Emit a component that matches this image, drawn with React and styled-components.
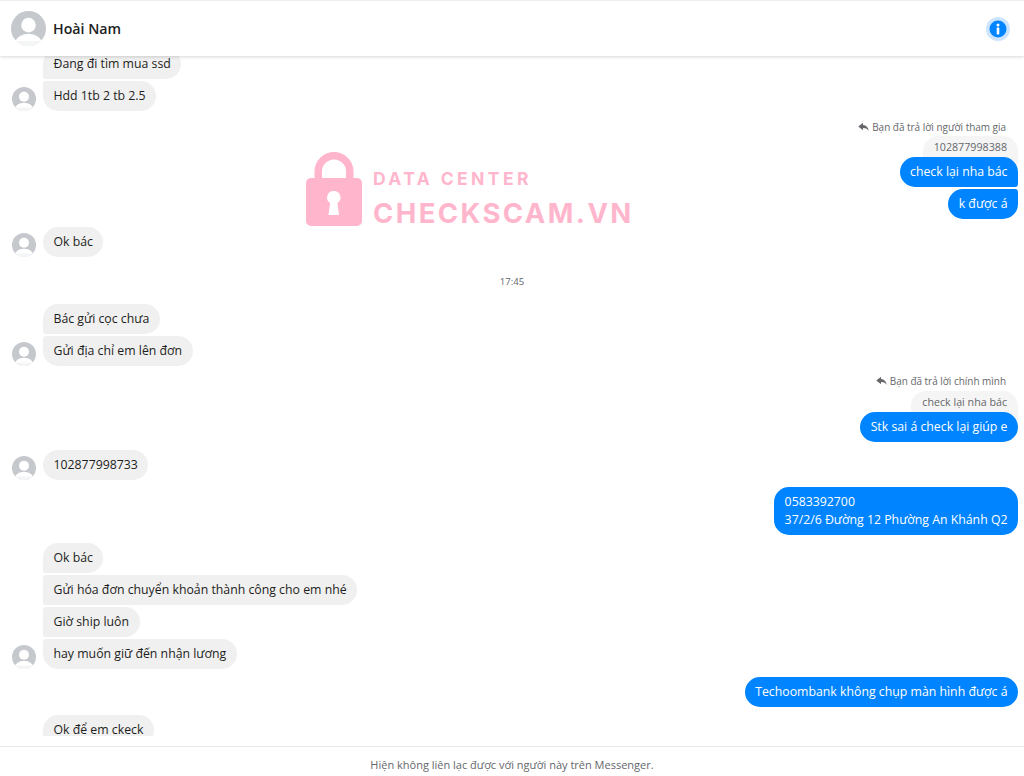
import React from "react";
import styled, { createGlobalStyle } from "styled-components";

const Global = createGlobalStyle`
  html, body { margin: 0; padding: 0; background: #fff; }
  * { box-sizing: border-box; }
  body { font-family: "Open Sans", "Noto Sans", sans-serif; }
`;
const Page = styled.div`
  width: 1024px; height: 776px; position: relative; overflow: hidden;
  display: flex; flex-direction: column; background: #fff; color: #1c1e21;
`;
const Header = styled.header`
  height: 56px; flex: none; display: flex; align-items: center; justify-content: space-between;
  padding: 0 14px 0 11px; background: #fff; position: relative; z-index: 2;
  border-top: 1px solid #eceef0;
  box-shadow: 0 1px 3px rgba(0,0,0,.16);
`;
const Person = styled.div`display: flex; align-items: center; gap: 7px;`;
const Name = styled.div`font-size: 14.2px; font-weight: 600; color: #1c1e21;`;
const InfoRing = styled.div`
  width: 24px; height: 24px; border-radius: 50%; background: #cce4ff;
  display: flex; align-items: center; justify-content: center;
`;
const Thread = styled.main`
  height: 680px; flex: none; overflow: hidden; padding: 0 6px 0 12px;
  display: flex; flex-direction: column; gap: 7.75px;
`;
const Group = styled.div`
  display: flex; flex-direction: column; gap: 2px;
  align-items: ${p => (p.$mine ? "flex-end" : "stretch")};
  margin-top: ${p => p.$top || 0}px;
`;
const Row = styled.div`display: flex; align-items: flex-end; gap: 7px; padding-left: ${p => (p.$indent ? 31 : 0)}px;`;
const radius = (mine, pos) => {
  const small = 3, big = 15;
  const t = pos === "middle" || pos === "last" ? small : big;
  const b = pos === "middle" || pos === "first" ? small : big;
  return mine ? `${big}px ${t}px ${b}px ${big}px` : `${t}px ${big}px ${big}px ${b}px`;
};
const Bubble = styled.div`
  padding: 6px 10.5px; font-size: 12.3px; line-height: 18px; white-space: pre-line;
  background: ${p => (p.$mine ? "#0084ff" : "#f1f0f0")};
  color: ${p => (p.$mine ? "#fff" : "#1c1e21")};
  border-radius: ${p => radius(p.$mine, p.$pos)};
  position: relative; z-index: 1;
`;
const ReplyLabel = styled.div`
  display: flex; align-items: center; gap: 3px; height: 15.25px; margin-right: 12px;
  font-size: 9.95px; color: #65676b;
`;
const Quote = styled.div`
  background: #f5f5f5; color: #65676b; font-size: 10.7px; line-height: 16px;
  padding: 3px 11px 10px; border-radius: 15px 15px 0 0; margin-bottom: -10px;
`;
const Stamp = styled.div`
  text-align: center; font-size: 9.6px; line-height: 14px; color: #65676b; margin: 10.5px 6px 6.75px 0;
`;
const Footer = styled.footer`
  margin-top: auto; height: 30px; padding-top: 5px; border-top: 1px solid #e9eaec;
  display: flex; align-items: center; justify-content: center;
  font-size: 11px; color: #65676b;
`;
const Watermark = styled.div`
  position: absolute; left: 306px; top: 152px; display: flex; gap: 11px; align-items: flex-start;
  color: #ffb6cd; font-family: Inter, "Open Sans", sans-serif; font-weight: 700; pointer-events: none;
`;
const MarkText = styled.div`display: flex; flex-direction: column; padding-top: 15px;`;
const MarkSmall = styled.div`font-size: 17.5px; line-height: 23px; letter-spacing: 3.4px;`;
const MarkLarge = styled.div`font-size: 27.5px; line-height: 36px; margin-top: 5px; letter-spacing: 2.4px;`;

const Avatar = ({ size }) => (
  <svg width={size} height={size} viewBox="0 0 36 36">
    <defs><clipPath id={`av${size}`}><circle cx="18" cy="18" r="18" /></clipPath></defs>
    <g clipPath={`url(#av${size})`}>
      <rect width="36" height="36" fill="#c5c8cc" />
      <circle cx="18" cy="14.5" r="7.5" fill="#fff" />
      <ellipse cx="18" cy="33" rx="13.5" ry="9.5" fill="#fff" />
      <rect y="31" width="36" height="5" fill="#f0f1f2" opacity=".7" />
    </g>
  </svg>
);
const ReplyIcon = () => (
  <svg width="11" height="10" viewBox="0 0 12 10" fill="#65676b">
    <path d="M5.500 0.300 0.300 4.400 5.500 8.500V6c2.700 0 4.500.7 6.200 3.300-.3-3.700-2.400-6.200-6.200-6.600z" />
  </svg>
);
const InfoIcon = () => (
  <svg width="18" height="18" viewBox="0 0 18 18">
    <circle cx="9" cy="9" r="8.500" fill="#0084ff" />
    <circle cx="9" cy="5.100" r="1.500" fill="#fff" />
    <rect x="7.700" y="7.600" width="2.600" height="6.800" rx=".6" fill="#fff" />
  </svg>
);
const Lock = () => (
  <svg width="56" height="74" viewBox="0 0 56 74">
    <path d="M8.500 28V19.500a19.500 19.500 0 0 1 39 0V28H40V19.500a12 12 0 0 0-24 0V28z" fill="#ffb6cd" />
    <path fillRule="evenodd" fill="#ffb6cd" d="M5 26h46a5 5 0 0 1 5 5v38a5 5 0 0 1-5 5H5a5 5 0 0 1-5-5V31a5 5 0 0 1 5-5zM27.500 39a6.500 6.500 0 0 0-3.400 12L22.500 63h10.500l-1.600-12a6.500 6.500 0 0 0-3.900-12z" />
  </svg>
);

const Theirs = ({ items, top, cut }) => (
  <Group $top={top}>
    {items.map((t, i) => {
      const last = i === items.length - 1;
      const pos = items.length === 1 && !cut ? "single" : i === 0 ? "first" : last ? "last" : "middle";
      const withAvatar = last && !cut;
      return (
        <Row key={t} $indent={!withAvatar}>
          {withAvatar && <Avatar size={24} />}
          <Bubble $pos={pos}>{t}</Bubble>
        </Row>
      );
    })}
  </Group>
);
const Mine = ({ label, quote, items }) => (
  <Group $mine>
    {label && <ReplyLabel><ReplyIcon />{label}</ReplyLabel>}
    {quote && <Quote>{quote}</Quote>}
    {items.map((t, i) => {
      const last = i === items.length - 1;
      const pos = items.length === 1 ? "single" : i === 0 ? "first" : last ? "last" : "middle";
      return <Bubble key={t} $mine $pos={pos}>{t}</Bubble>;
    })}
  </Group>
);

export default function App() {
  return (
    <Page>
      <Global />
      <Header>
        <Person><Avatar size={35} /><Name>Hoài Nam</Name></Person>
        <InfoRing><InfoIcon /></InfoRing>
      </Header>
      <Thread>
        <Theirs top={-6.7} items={["Đang đi tìm mua ssd", "Hdd 1tb 2 tb 2.5"]} />
        <Mine label="Bạn đã trả lời người tham gia" quote="102877998388" items={["check lại nha bác", "k được á"]} />
        <Theirs items={["Ok bác"]} />
        <Stamp>17:45</Stamp>
        <Theirs items={["Bác gửi cọc chưa", "Gửi địa chỉ em lên đơn"]} />
        <Mine label="Bạn đã trả lời chính mình" quote="check lại nha bác" items={["Stk sai á check lại giúp e"]} />
        <Theirs items={["102877998733"]} />
        <Mine items={["0583392700\n37/2/6 Đường 12 Phường An Khánh Q2"]} />
        <Theirs items={["Ok bác", "Gửi hóa đơn chuyển khoản thành công cho em nhé", "Giờ ship luôn", "hay muốn giữ đến nhận lương"]} />
        <Mine items={["Techoombank không chụp màn hình được á"]} />
        <Theirs cut items={["Ok để em ckeck"]} />
      </Thread>
      <Footer>Hiện không liên lạc được với người này trên Messenger.</Footer>
      <Watermark>
        <Lock />
        <MarkText>
          <MarkSmall>DATA CENTER</MarkSmall>
          <MarkLarge>CHECKSCAM.VN</MarkLarge>
        </MarkText>
      </Watermark>
    </Page>
  );
}
